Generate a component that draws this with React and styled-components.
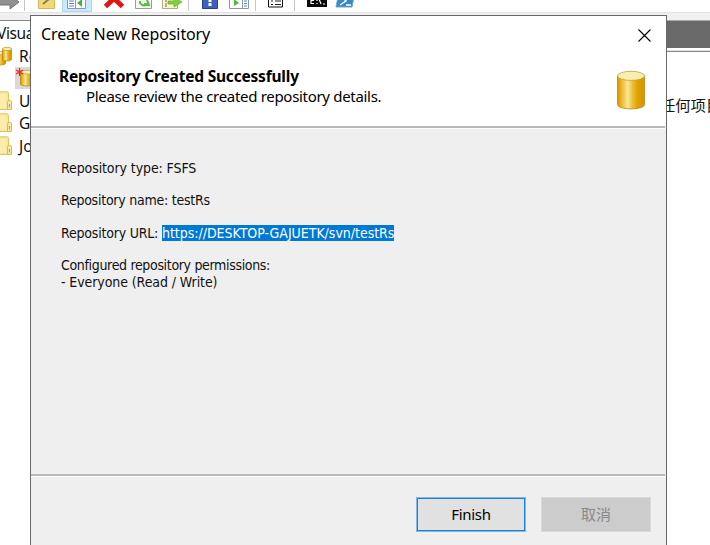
import React from "react";
import styled, { createGlobalStyle } from "styled-components";

const GlobalStyle = createGlobalStyle`
  * { box-sizing: border-box; }
  body { margin: 0; background: #fff; overflow: hidden; }
`;

const Desktop = styled.div`
  position: relative;
  display: flex;
  flex-direction: column;
  width: 710px;
  height: 545px;
  overflow: hidden;
  background: #fff;
  color: #111;
  font-family: "Noto Sans", "Noto Sans CJK SC", sans-serif;
`;

const Toolbar = styled.div`
  display: flex;
  flex: none;
  height: 13px;
  overflow: hidden;
  border-bottom: 1px solid #e3e3e3;
`;

const ToolbarArt = styled.svg`
  display: block;
  flex: none;
`;

const Workspace = styled.div`
  display: flex;
  flex: 1;
  justify-content: space-between;
  padding-top: 7px;
  background: #f0f0f0;
`;

const Tree = styled.div`
  width: 34px;
  padding-top: 1px;
  overflow: hidden;
  border-top: 1px solid #828790;
  background: #fff;
`;

const TreeRow = styled.div`
  display: flex;
  align-items: center;
  height: 22.5px;
  padding-left: ${(p) => p.$indent || 0}px;
  font-size: 15.5px;
  white-space: nowrap;
`;

const TreeIcon = styled.svg`
  display: block;
  flex: none;
  margin-right: ${(p) => p.$gap}px;
`;

const RootName = styled.span`
  margin-left: -3px;
  letter-spacing: -0.4px;
`;

const Selected = styled.div`
  width: 24px;
  height: 22px;
  background: #d9d9d9;
`;

const Results = styled.div`
  display: flex;
  flex-direction: column;
  flex: 1;
  background: #fff;
`;

const ResultsHeader = styled.div`
  height: 32px;
  border: solid #828790;
  border-width: 0 0 1px;
  background: linear-gradient(#a8a8a8 0 1px, #696969 1px 28px, #fff 28px 30px, #dfe3ea 30px);
`;

const EmptyText = styled.div`
  align-self: flex-end;
  width: 50px;
  margin-top: 41px;
  overflow: hidden;
  font-size: 15.3px;
  line-height: 24px;
  white-space: nowrap;
`;

const Dialog = styled.section`
  position: absolute;
  top: 15px;
  left: 30px;
  display: flex;
  flex-direction: column;
  width: 637px;
  height: 540px;
  border: 1px solid #696969;
  background: #efefef;
`;

const TitleBar = styled.header`
  display: flex;
  align-items: center;
  justify-content: space-between;
  height: 38px;
  padding: 0 15px 0 10px;
  background: #fff;
  color: #000;
`;

const Title = styled.span`
  margin-top: -2px;
  font-size: 16px;
  line-height: 22px;
  letter-spacing: -0.11px;
`;

const Banner = styled.div`
  display: flex;
  justify-content: space-between;
  height: 72px;
  padding: 12px 20px 0 28px;
  background: #fff;
  color: #000;
`;

const Heading = styled.h1`
  margin: 0;
  font-size: 15.5px;
  font-weight: 700;
  line-height: 20px;
  letter-spacing: -0.2px;
`;

const Subheading = styled.p`
  margin: 0 0 0 27px;
  font-size: 15px;
  line-height: 20px;
  letter-spacing: -0.31px;
`;

const BannerIcon = styled.svg`
  display: block;
  margin-top: 4px;
`;

const Rule = styled.div`
  flex: none;
  width: 634px;
  height: 3px;
  background: linear-gradient(#b9b9b9 0 2px, #fff 2px);
`;

const Details = styled.div`
  height: 345px;
  padding: 31px 0 0 30px;
  font-family: "DejaVu Sans Condensed", "DejaVu Sans", sans-serif;
  font-stretch: condensed;
  font-size: 14px;
  line-height: 16.3px;
`;

const Paragraph = styled.p`
  margin: 0 0 16.2px;
  white-space: nowrap;
`;

const Tracked = styled.span`
  letter-spacing: ${(p) => p.$tracking}px;
`;

const Selection = styled.span`
  background: #0078d7;
  color: #fff;
  letter-spacing: ${(p) => p.$tracking}px;
`;

const Footer = styled.footer`
  display: flex;
  gap: 15px;
  justify-content: flex-end;
  padding: 20px 15px 0 0;
`;

const Button = styled.button`
  width: 110px;
  height: 35px;
  padding: 0 0 2px;
  border: 1px solid ${(p) => (p.disabled ? "#d9d9d9" : "#7db8e8")};
  background: ${(p) => (p.disabled ? "#cccccc" : "#e1e1e1")};
  box-shadow: ${(p) => (p.disabled ? "none" : "inset 0 0 0 1px #1c82d8")};
  color: ${(p) => (p.disabled ? "#898989" : "#000")};
  font: 15px "Noto Sans", "Noto Sans CJK SC", sans-serif;
  letter-spacing: ${(p) => (p.disabled ? 0 : -0.3)}px;
`;

function Cylinder({ x, y, w, h }) {
  const r = w / 2;
  const c = h * 0.12;
  return (
    <g transform={`translate(${x} ${y})`}>
      <path
        d={`M.5 ${c} V${h - c} C.5 ${h + c * 0.3} ${w - 0.5} ${h + c * 0.3} ${w - 0.5} ${h - c} V${c}Z`}
        fill="url(#gold)"
        stroke="#b98916"
        strokeWidth=".8"
      />
      <ellipse cx={r} cy={c + 0.3} rx={r - 0.5} ry={c} fill="#f8eeb0" stroke="#c6a03b" strokeWidth=".8" />
    </g>
  );
}

function GoldGradient() {
  return (
    <defs>
      <linearGradient id="gold">
        <stop offset="0" stopColor="#d99400" />
        <stop offset=".15" stopColor="#edb72a" />
        <stop offset=".38" stopColor="#f7e899" />
        <stop offset=".55" stopColor="#edc03a" />
        <stop offset=".75" stopColor="#dfa000" />
        <stop offset="1" stopColor="#d99500" />
      </linearGradient>
    </defs>
  );
}

function FolderIcon() {
  return (
    <TreeIcon width="13" height="20" $gap={6}>
      <path d="M-2 .8H7Q8.500.8 8.500 2.500V18.500H-2Z" fill="#fae798" stroke="#e3c266" />
      <path d="M-1 2.500H6V17H-1Z" fill="#fcedac" />
      <path d="M8 9.500H10.500Q11.500 9.500 11.500 11V18.500H7.500V12Z" fill="#fbe9a3" stroke="#d8bb60" />
      <path d="M9.500 13v3.500" stroke="#7fb2c4" strokeWidth="1.200" />
    </TreeIcon>
  );
}

function ToolbarIcons() {
  return (
    <ToolbarArt width="710" height="12" viewBox="0 0 710 12">
      <path d="M-1-2H10V-4L19 2 10 9V5H-1Z" fill="#929292" stroke="#747474" />
      <path d="M24.500 0V11M188.500 0V11M255.500 0V11M294.500 0V11" stroke="#c5c5c5" />
      <path d="M38.500-3H54.500V8.500H38.500Z" fill="#f2d87a" stroke="#d5b45d" />
      <path d="M43 4 49-1" stroke="#8a8048" strokeWidth="2" />
      <path d="M62.500-2H91.500V11.500H62.500Z" fill="#cce8ff" stroke="#a9d8ff" />
      <path d="M67.500-2H85.500V8.500H67.500Z" fill="#fff" stroke="#8b99aa" />
      <path d="M69 1h5M69 3.500h5M69 6h5" stroke="#5588b5" />
      <path d="M75.500-1V8" stroke="#8b99aa" />
      <path d="M77 3 82-1V7Z" fill="#4caf3c" />
      <path d="M105.500 6.500 114-1.500 122.500 6.500" fill="none" stroke="#df1515" strokeWidth="5" />
      <path d="M135.500-2H151.500V8.500H135.500Z" fill="#f7f8f5" stroke="#9aa08f" />
      <path d="M140 1v2q4 5 8 0M147 0l2 5-5-1" fill="none" stroke="#55bb42" strokeWidth="2" />
      <path d="M162.500-2H177.500V8.500H162.500Z" fill="#faf3cd" stroke="#b5aa7d" />
      <path d="M165 1h2M165 4h2M165 6h2" stroke="#667" />
      <path d="M168 1H174V-3L182 2 174 7V4H168Z" fill="#85cf38" stroke="#62ad2c" strokeWidth=".7" />
      <path d="M202.500-2H217.500V8.500H202.500Z" fill="#405ebd" stroke="#263f90" />
      <path d="M210-1V2M210 3V6" stroke="#fff" strokeWidth="3" />
      <path d="M229.500-2H248.500V8.500H229.500Z" fill="#fff" stroke="#8997a5" />
      <path d="M242.500-1V8" stroke="#8997a5" />
      <path d="M244 1h3M244 3.500h3M244 6h3" stroke="#5588b5" />
      <path d="M234-1 239 3 234 6Z" fill="#59b83d" />
      <path d="M268.500-3H282.500V7H268.500Z" fill="#fff" stroke="#111" />
      <path d="M271 1h2M275 1h6M271 4.500h2M275 4.500h6" stroke="#222" />
      <path d="M307-3H327V7H307Z" fill="#090909" />
      <path d="M314 .5h-3v3h3M317 0v1M317 3v1M319-1l2 5M323 4h2" fill="none" stroke="#fff" strokeWidth="1.200" />
      <path d="M338-3H354L352 7H336Z" fill="#3987c4" stroke="#66a8d8" />
      <path d="M340 5 346 1 343-2M346 5h5" fill="none" stroke="#fff" strokeWidth="1.500" />
    </ToolbarArt>
  );
}

export default function App() {
  return (
    <Desktop>
      <GlobalStyle />
      <Toolbar>
        <ToolbarIcons />
      </Toolbar>
      <Workspace>
        <Tree>
          <TreeRow><RootName>Visua</RootName></TreeRow>
          <TreeRow>
            <TreeIcon width="13" height="20" $gap={6}>
              <GoldGradient />
              <Cylinder x={-5} y={5} w={11} h={14} />
              <Cylinder x={2} y={1} w={10} h={14} />
            </TreeIcon>
            Re
          </TreeRow>
          <TreeRow $indent={15}>
            <Selected>
              <TreeIcon width="24" height="22" $gap={0}>
                <Cylinder x={5} y={3} w={14} h={16} />
                <path d="M4.500 1V9M1 3 8 7M8 3 1 7" stroke="#f02222" strokeWidth="1.300" />
              </TreeIcon>
            </Selected>
          </TreeRow>
          <TreeRow><FolderIcon />U</TreeRow>
          <TreeRow><FolderIcon />G</TreeRow>
          <TreeRow><FolderIcon />Jo</TreeRow>
        </Tree>
        <Results>
          <ResultsHeader />
          <EmptyText>任何项目</EmptyText>
        </Results>
      </Workspace>

      <Dialog>
        <TitleBar>
          <Title>Create New Repository</Title>
          <svg width="13" height="13" viewBox="0 0 13 13">
            <path d="M.5.5 12.500 12.500M12.500.5.5 12.500" stroke="#000" strokeWidth="1.100" />
          </svg>
        </TitleBar>
        <Banner>
          <div>
            <Heading>Repository Created Successfully</Heading>
            <Subheading>Please review the created repository details.</Subheading>
          </div>
          <BannerIcon width="30" height="40" viewBox="0 0 30 40">
            <GoldGradient />
            <Cylinder x={1} y={1} w={28} h={38} />
          </BannerIcon>
        </Banner>
        <Rule />
        <Details>
          <Paragraph><Tracked $tracking={-0.1}>Repository type: FSFS</Tracked></Paragraph>
          <Paragraph><Tracked $tracking={-0.24}>Repository name: testRs</Tracked></Paragraph>
          <Paragraph>
            <Tracked $tracking={-0.2}>Repository URL: </Tracked>
            <Selection $tracking={-0.02}>https://DESKTOP-GAJUETK/svn/testRs</Selection>
          </Paragraph>
          <Paragraph>
            <Tracked $tracking={-0.33}>Configured repository permissions:</Tracked>
            <br />
            <Tracked $tracking={-0.09}>- Everyone (Read / Write)</Tracked>
          </Paragraph>
        </Details>
        <Rule />
        <Footer>
          <Button>Finish</Button>
          <Button disabled>取消</Button>
        </Footer>
      </Dialog>
    </Desktop>
  );
}
